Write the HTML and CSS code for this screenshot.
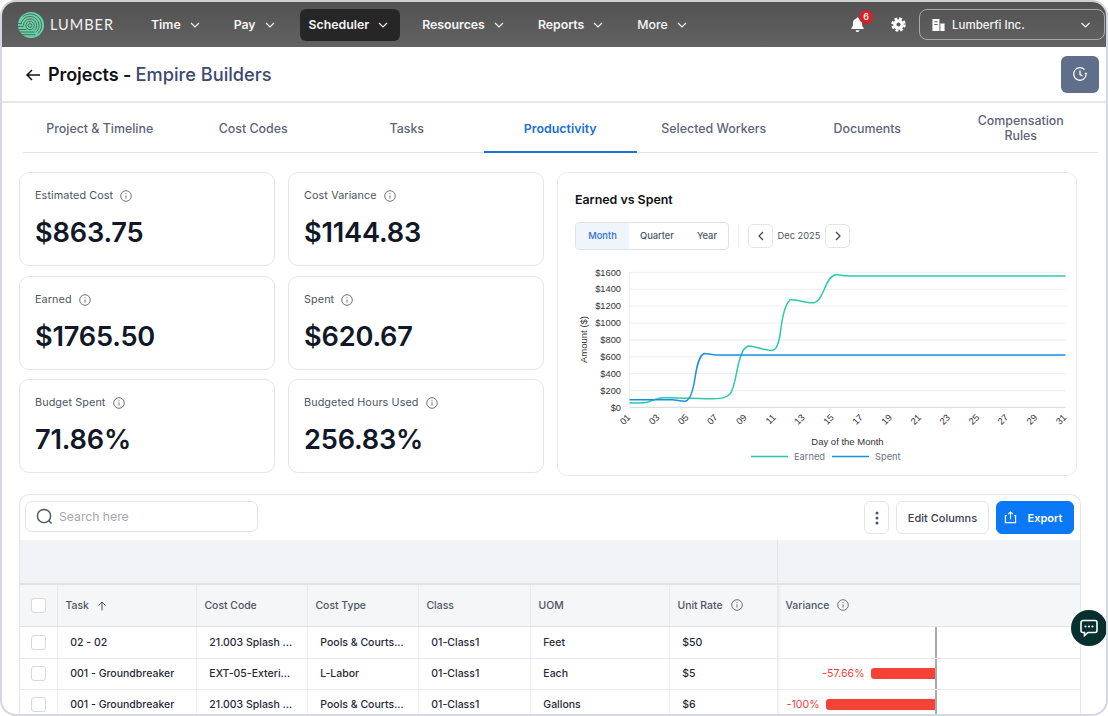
FILE: index.html
```html
<!DOCTYPE html>
<html lang="en">
<head>
<meta charset="utf-8">
<title>Projects - Empire Builders</title>
<link rel="stylesheet" href="styles.css">
</head>
<body>
<div class="window">
  <header class="topbar">
    <div class="brand">
      <svg class="logo" viewBox="0 0 26 26" width="26" height="26" fill="none" stroke="#595959" stroke-width="0.9">
        <circle cx="13" cy="13" r="13" fill="#62d6a6" stroke="none"/>
        <circle cx="12" cy="13.500" r="1.900"/>
        <circle cx="12" cy="13.500" r="4.200"/>
        <path d="M5.400 13.500a6.600 6.600 0 0 1 13.200 0c0 2-.8 3.700-2.200 4.900"/>
        <path d="M3 12.500C3.500 8 7.300 4.500 12 4.500c5 0 9 4 9 9 0 2.800-1.200 5.200-3 6.800"/>
        <path d="M5 4.500C7 2.900 9.500 2 12.300 2c6.200 0 11.300 5 11.300 11.300 0 3.300-1.400 6.200-3.600 8.300"/>
        <path d="M0 11.500h3M0 14.500h5.500M.5 17.500h8M1.500 20h15M4 22.700h13.500"/>
      </svg>
      <span class="wordmark">LUMBER</span>
    </div>
    <nav class="nav">
      <a class="nav-item">Time<svg class="chev" viewBox="0 0 10 6" width="10" height="6"><path d="M1 1l4 4 4-4"/></svg></a>
      <a class="nav-item">Pay<svg class="chev" viewBox="0 0 10 6" width="10" height="6"><path d="M1 1l4 4 4-4"/></svg></a>
      <a class="nav-item active">Scheduler<svg class="chev" viewBox="0 0 10 6" width="10" height="6"><path d="M1 1l4 4 4-4"/></svg></a>
      <a class="nav-item">Resources<svg class="chev" viewBox="0 0 10 6" width="10" height="6"><path d="M1 1l4 4 4-4"/></svg></a>
      <a class="nav-item">Reports<svg class="chev" viewBox="0 0 10 6" width="10" height="6"><path d="M1 1l4 4 4-4"/></svg></a>
      <a class="nav-item muted">More<svg class="chev" viewBox="0 0 10 6" width="10" height="6"><path d="M1 1l4 4 4-4"/></svg></a>
    </nav>
    <div class="top-actions">
      <span class="bell">
        <svg viewBox="0 0 16 18" width="15" height="17" fill="#fff"><path d="M8 1.500a1.200 1.200 0 0 1 1.200 1.200c2.400.6 3.700 2.500 3.700 5v2.600l1.600 2.400v1H1.500v-1l1.600-2.400V7.700c0-2.500 1.300-4.400 3.700-5A1.200 1.200 0 0 1 8 1.500zM6 15h4a2 2 0 0 1-4 0z"/></svg>
        <span class="badge">6</span>
      </span>
      <svg class="gear" viewBox="0 0 16 16" width="15" height="15">
        <circle cx="8" cy="8" r="5.600" fill="#fff"/>
        <circle cx="8" cy="8" r="6.300" fill="none" stroke="#fff" stroke-width="2.800" stroke-dasharray="2.900 2.050"/>
        <circle cx="8" cy="8" r="2.200" fill="#5a5a5a"/>
      </svg>
      <div class="company">
        <svg viewBox="0 0 15 15" width="15" height="14" fill="#fff"><path d="M1 1h7.500v13H1zM9.500 6H14v8H9.500z"/><path d="M3 4h3.500M3 7h3.500" stroke="#5a5a5a" stroke-width="1.200"/></svg>
        <span class="company-name">Lumberfi Inc.</span>
        <svg class="chev" viewBox="0 0 10 6" width="11" height="6"><path d="M1 1l4 4 4-4"/></svg>
      </div>
    </div>
  </header>

  <section class="titlebar">
    <div class="title">
      <svg viewBox="0 0 14 12" width="14" height="12" fill="none" stroke="#111" stroke-width="1.500"><path d="M14 6H1M6 1L1 6l5 5"/></svg>
      <h1><span class="title-main">Projects - </span><span class="title-sub">Empire Builders</span></h1>
    </div>
    <button class="history">
      <svg viewBox="0 0 16 16" width="16" height="16" fill="none" stroke="#fff" stroke-width="1.300"><path d="M14.200 8.500A6.300 6.300 0 1 1 12.500 3.600"/><path d="M8 4.500V8.500l2.500 1.300"/><path d="M15.500 6.800l-1.500 2-1.700-1.800z" fill="#fff" stroke="none"/></svg>
    </button>
  </section>

  <div class="tabs">
    <a class="tab">Project &amp; Timeline</a>
    <a class="tab">Cost Codes</a>
    <a class="tab">Tasks</a>
    <a class="tab current">Productivity</a>
    <a class="tab">Selected Workers</a>
    <a class="tab">Documents</a>
    <a class="tab">Compensation<br>Rules</a>
  </div>

  <main class="content">
    <div class="overview">
      <div class="stats">
        <div class="stat"><div class="stat-label">Estimated Cost<svg class="info" viewBox="0 0 12 12"><circle cx="6" cy="6" r="5.300"/><path d="M6 5.400v3.200M6 3.200v1"/></svg></div><div class="stat-value">$863.75</div></div>
        <div class="stat"><div class="stat-label">Cost Variance<svg class="info" viewBox="0 0 12 12"><circle cx="6" cy="6" r="5.300"/><path d="M6 5.400v3.200M6 3.200v1"/></svg></div><div class="stat-value">$1144.83</div></div>
        <div class="stat"><div class="stat-label">Earned<svg class="info" viewBox="0 0 12 12"><circle cx="6" cy="6" r="5.300"/><path d="M6 5.400v3.200M6 3.200v1"/></svg></div><div class="stat-value">$1765.50</div></div>
        <div class="stat"><div class="stat-label">Spent<svg class="info" viewBox="0 0 12 12"><circle cx="6" cy="6" r="5.300"/><path d="M6 5.400v3.200M6 3.200v1"/></svg></div><div class="stat-value">$620.67</div></div>
        <div class="stat"><div class="stat-label">Budget Spent<svg class="info" viewBox="0 0 12 12"><circle cx="6" cy="6" r="5.300"/><path d="M6 5.400v3.200M6 3.200v1"/></svg></div><div class="stat-value">71.86%</div></div>
        <div class="stat"><div class="stat-label">Budgeted Hours Used<svg class="info" viewBox="0 0 12 12"><circle cx="6" cy="6" r="5.300"/><path d="M6 5.400v3.200M6 3.200v1"/></svg></div><div class="stat-value">256.83%</div></div>
      </div>

      <section class="chart-card">
        <h2 class="chart-title">Earned vs Spent</h2>
        <div class="chart-controls">
          <div class="segmented">
            <span class="seg seg-on">Month</span>
            <span class="seg seg-q">Quarter</span>
            <span class="seg seg-y">Year</span>
          </div>
          <span class="vdivider"></span>
          <button class="pager"><svg viewBox="0 0 6 10" width="6" height="10"><path d="M5 1L1 5l4 4"/></svg></button>
          <span class="period">Dec 2025</span>
          <button class="pager"><svg viewBox="0 0 6 10" width="6" height="10"><path d="M1 1l4 4-4 4"/></svg></button>
        </div>
        <svg class="chart" viewBox="558 256 518 219" width="518" height="219">
          <g class="grid">
            <path d="M629.500 272.500H1065.500M629.500 289.300H1065.500M629.500 306.200H1065.500M629.500 323.100H1065.500M629.500 340H1065.500M629.500 356.800H1065.500M629.500 373.700H1065.500M629.500 390.500H1065.500"/>
            <path d="M629.500 272V407"/>
          </g>
          <path class="axis" d="M629.500 407.300H1065.500"/>
          <g class="ylabels">
            <text x="621" y="275.500">$1600</text><text x="621" y="292.400">$1400</text><text x="621" y="309.300">$1200</text><text x="621" y="326.100">$1000</text><text x="621" y="343">$800</text><text x="621" y="359.900">$600</text><text x="621" y="376.800">$400</text><text x="621" y="393.700">$200</text><text x="621" y="410.500">$0</text>
          </g>
          <text class="axis-title" transform="translate(587 339.500) rotate(-90)">Amount ($)</text>
          <g class="xlabels">
            <text transform="translate(631 418) rotate(-45)">01</text>
            <text transform="translate(660.100 418) rotate(-45)">03</text>
            <text transform="translate(689.100 418) rotate(-45)">05</text>
            <text transform="translate(718.200 418) rotate(-45)">07</text>
            <text transform="translate(747.300 418) rotate(-45)">09</text>
            <text transform="translate(776.300 418) rotate(-45)">11</text>
            <text transform="translate(805.400 418) rotate(-45)">13</text>
            <text transform="translate(834.500 418) rotate(-45)">15</text>
            <text transform="translate(863.500 418) rotate(-45)">17</text>
            <text transform="translate(892.600 418) rotate(-45)">19</text>
            <text transform="translate(921.700 418) rotate(-45)">21</text>
            <text transform="translate(950.700 418) rotate(-45)">23</text>
            <text transform="translate(979.800 418) rotate(-45)">25</text>
            <text transform="translate(1008.900 418) rotate(-45)">27</text>
            <text transform="translate(1037.900 418) rotate(-45)">29</text>
            <text transform="translate(1067 418) rotate(-45)">31</text>
          </g>
          <text class="axis-title" x="847.500" y="444.500">Day of the Month</text>
          <path class="line-earned" d="M629.500 402.700C636 403.200 643 403.500 648 402C654 399.500 658 398 664 397.800C672 397.500 680 398.300 690 398.300C698 398.300 704 399 712 398.800C720 398.500 726 398.500 730 394C735 388 736 372 739 362C742 351 744 347 749 346C756 346.500 766 350.500 771 350.500C776 350.500 778 346 780 335C782 320 784 306 790 299.800C796 299.300 808 303.500 814 302.700C819 302 821 296 824 290C827 282 830 276 836 274.500C840 275 843 276 850 276H1065.500"/>
          <path class="line-spent" d="M629.500 399.700H672C677 399.700 682 402 686 401C690 399.500 693 391 695 378C697 365 699 356 704 353.500C709 353.500 713 355 720 355H1065.500"/>
          <path class="line-earned" d="M751 456.500H788"/>
          <text class="legend" x="794" y="460">Earned</text>
          <path class="line-spent" d="M832 456.500H869"/>
          <text class="legend" x="875" y="460">Spent</text>
        </svg>
      </section>
    </div>

    <section class="table-card">
      <div class="toolbar">
        <div class="search">
          <svg viewBox="0 0 18 18" width="17" height="17" fill="none" stroke="#4b5563" stroke-width="1.500"><circle cx="8.500" cy="8.500" r="7"/><path d="M13.500 13.500l3 3"/></svg>
          <span>Search here</span>
        </div>
        <div class="toolbar-actions">
          <button class="btn btn-kebab"><svg viewBox="0 0 4 14" width="4" height="14" fill="#4b5563"><circle cx="2" cy="2" r="1.500"/><circle cx="2" cy="7" r="1.500"/><circle cx="2" cy="12" r="1.500"/></svg></button>
          <button class="btn btn-edit">Edit Columns</button>
          <button class="btn btn-export"><svg viewBox="0 0 14 14" width="13" height="13" fill="none" stroke="#fff" stroke-width="1.200"><path d="M3 5H1.500v7.500h11V5H11M7 9V1M4.500 3.300L7 1l2.500 2.300"/></svg>Export</button>
        </div>
      </div>
      <table class="grid-table">
        <colgroup>
          <col class="c-check"><col class="c-task"><col class="c-code"><col class="c-type"><col class="c-class"><col class="c-uom"><col class="c-rate"><col class="c-var">
        </colgroup>
        <thead>
          <tr class="band"><th colspan="7"></th><th class="band-pin"></th></tr>
          <tr class="head">
            <th><span class="check"></span></th>
            <th>Task<svg class="sort" viewBox="0 0 10 10" width="10" height="10"><path d="M5 9.500V1M1.500 4.500L5 1l3.500 3.500"/></svg></th>
            <th>Cost Code</th>
            <th>Cost Type</th>
            <th>Class</th>
            <th>UOM</th>
            <th>Unit Rate<svg class="info" viewBox="0 0 12 12"><circle cx="6" cy="6" r="5.300"/><path d="M6 5.400v3.200M6 3.200v1"/></svg></th>
            <th class="pin">Variance<svg class="info" viewBox="0 0 12 12"><circle cx="6" cy="6" r="5.300"/><path d="M6 5.400v3.200M6 3.200v1"/></svg></th>
          </tr>
        </thead>
        <tbody>
          <tr>
            <td><span class="check"></span></td><td>02 - 02</td><td>21.003 Splash ...</td><td>Pools &amp; Courts...</td><td>01-Class1</td><td>Feet</td><td>$50</td>
            <td class="pin var-cell"><div class="var"></div></td>
          </tr>
          <tr>
            <td><span class="check"></span></td><td>001 - Groundbreaker</td><td>EXT-05-Exteri...</td><td>L-Labor</td><td>01-Class1</td><td>Each</td><td>$5</td>
            <td class="pin var-cell"><div class="var"><span class="var-num">-57.66%</span><span class="bar" style="width:64px"></span></div></td>
          </tr>
          <tr>
            <td><span class="check"></span></td><td>001 - Groundbreaker</td><td>21.003 Splash ...</td><td>Pools &amp; Courts...</td><td>01-Class1</td><td>Gallons</td><td>$6</td>
            <td class="pin var-cell"><div class="var"><span class="var-num">-100%</span><span class="bar" style="width:109px"></span></div></td>
          </tr>
        </tbody>
      </table>
    </section>
  </main>

  <button class="chat">
    <svg viewBox="0 0 20 20" width="20" height="20" fill="none"><path d="M4 2.500h12a2 2 0 0 1 2 2v8a2 2 0 0 1-2 2H9l-3.500 3v-3H4a2 2 0 0 1-2-2v-8a2 2 0 0 1 2-2z" stroke="#fff" stroke-width="1.600"/><circle cx="6.500" cy="8.500" r="1.100" fill="#fff"/><circle cx="10" cy="8.500" r="1.100" fill="#fff"/><circle cx="13.500" cy="8.500" r="1.100" fill="#fff"/></svg>
  </button>
</div>
</body>
</html>
```

FILE: styles.css
```css
* { box-sizing: border-box; }
html, body { margin: 0; padding: 0; height: 100%; }
body {
  background: #fff;
  font-family: Inter, "Liberation Sans", sans-serif;
  color: #111827;
  overflow: hidden;
}
button { font-family: inherit; cursor: pointer; }

.window {
  position: relative;
  width: 1108px;
  height: 716px;
  background: #fff;
  border: 2px solid #d5d7e2;
  border-top-color: #cfcfcf;
  border-radius: 16px;
  overflow: hidden;
}

/* top bar */
.topbar {
  display: flex;
  align-items: center;
  height: 45px;
  padding: 0 1px 0 16px;
  background: linear-gradient(#525252, #626262);
}
.brand { display: flex; align-items: center; gap: 6px; width: 124px; }
.logo { display: block; flex: none; }
.wordmark {
  font-family: Lato, "Liberation Sans", sans-serif;
  font-size: 14.5px;
  letter-spacing: 1px;
  color: #f2f2f2;
}
.nav { display: flex; align-items: center; gap: 13px; }
.nav-item {
  display: flex;
  align-items: center;
  gap: 9px;
  height: 32px;
  padding: 0 12px 0 9px;
  border-radius: 6px;
  font-size: 12.3px;
  font-weight: 600;
  color: #f5f5f5;
}
.nav-item.active { background: #262626; }
.nav-item.muted { font-weight: 500; }
.chev { display: block; flex: none; fill: none; stroke: #f2f2f2; stroke-width: 1.2; }
.top-actions { display: flex; align-items: center; margin-left: auto; }
.bell { position: relative; display: block; height: 17px; margin-right: 26px; }
.bell svg { display: block; }
.badge {
  position: absolute;
  top: -6px;
  left: 9px;
  width: 14px;
  height: 14px;
  border-radius: 50%;
  background: #d3222a;
  color: #fff;
  font-size: 9px;
  font-weight: 500;
  line-height: 14px;
  text-align: center;
}
.gear { display: block; margin-right: 13px; }
.company {
  display: flex;
  align-items: center;
  width: 186px;
  height: 31px;
  padding: 0 13px 0 11px;
  border: 1px solid #a9a9a9;
  border-radius: 8px;
  color: #f5f5f5;
}
.company-name { font-size: 11.5px; font-weight: 500; margin-left: 6px; }
.company .chev { margin-left: auto; }

/* title */
.titlebar {
  display: flex;
  align-items: center;
  justify-content: space-between;
  height: 56px;
  padding: 0 7px 0 24px;
  border-bottom: 2px solid #e6e7ea;
}
.title { display: flex; align-items: center; gap: 8px; padding-top: 1px; }
.title svg { display: block; }
.title h1 { margin: 0; font-size: 18px; font-weight: 500; line-height: 24px; }
.title-main { color: #0f1115; font-weight: 600; letter-spacing: -0.1px; }
.title-sub { color: #3c4a72; font-weight: 500; font-size: 18.2px; }
.history {
  display: flex;
  align-items: center;
  justify-content: center;
  width: 38px;
  height: 37px;
  padding: 0;
  border: 0;
  border-radius: 6px;
  background: #5f6e8a;
}

/* tabs */
.tabs {
  display: grid;
  grid-template-columns: repeat(7, 153.5px);
  height: 50px;
  margin-left: 21px;
  width: 1075px;
  border-bottom: 1px solid #e2e4e8;
}
.tab {
  display: flex;
  align-items: center;
  justify-content: center;
  text-align: center;
  font-size: 12.4px;
  line-height: 15px;
  font-weight: 500;
  color: #5c6478;
}
.tab.current {
  color: #1b6fd6;
  font-weight: 600;
  height: 50px;
  padding-top: 2px;
  border-bottom: 2px solid #1b6fd6;
}

/* main */
.content { padding: 19px 0 0 17px; }
.overview { display: flex; gap: 13px; align-items: flex-start; }
.stats {
  display: grid;
  grid-template-columns: 256px 256px;
  grid-auto-rows: 94px;
  gap: 9.6px 13px;
}
.stat {
  padding: 15px 15px 0;
  border: 1px solid #e4e6e9;
  border-radius: 10px;
  background: #fff;
}
.stat-label {
  display: flex;
  align-items: center;
  gap: 7px;
  font-size: 10.8px;
  line-height: 16px;
  color: #4b5563;
  font-weight: 400;
  letter-spacing: 0.1px;
}
.info {
  display: block;
  flex: none;
  width: 12px;
  height: 12px;
  fill: none;
  stroke: #5c6470;
  stroke-width: 0.9;
}
.stat-value {
  margin-top: 11px;
  font-size: 27.200px;
  line-height: 36px;
  font-weight: 600;
  color: #111827;
  letter-spacing: -0.2px;
}

/* chart */
.chart-card {
  width: 520px;
  height: 304px;
  border: 1px solid #e8eaed;
  border-radius: 10px;
  padding-top: 18px;
}
.chart-title {
  margin: 0 0 0 17px;
  font-size: 12.4px;
  line-height: 18px;
  font-weight: 600;
  color: #0f1115;
}
.chart-controls {
  display: flex;
  align-items: center;
  height: 29px;
  margin: 12px 0 0 17px;
}
.segmented {
  display: flex;
  align-items: stretch;
  width: 154px;
  height: 28px;
  border: 1px solid #dfe3e8;
  border-radius: 4px;
  overflow: hidden;
  font-size: 9.3px;
  font-weight: 500;
  color: #4b5563;
}
.seg { display: flex; align-items: center; }
.seg-on { width: 53px; justify-content: center; background: #f0f5fb; color: #2b6fe3; }
.seg-q { margin-left: 11px; }
.seg-y { margin-left: 23px; }
.vdivider { width: 1px; height: 24px; margin: 0 9px; background: #f0f1f3; }
.pager {
  display: flex;
  align-items: center;
  justify-content: center;
  width: 25px;
  height: 24px;
  padding: 0;
  background: #fff;
  border: 1px solid #e3e5e8;
  border-radius: 5px;
}
.pager svg { display: block; fill: none; stroke: #374151; stroke-width: 1.200; }
.period { width: 52px; text-align: center; font-size: 9.3px; font-weight: 400; color: #4b5563; }
.chart { display: block; margin-top: 6px; }
.grid path { fill: none; stroke: #f0f1f3; stroke-width: 1.300; }
.axis { fill: none; stroke: #d6d8dc; stroke-width: 1; }
.ylabels text { font-family: "Liberation Sans", sans-serif; font-size: 9.3px; text-anchor: end; fill: #333; }
.xlabels text { font-family: "Liberation Sans", sans-serif; font-size: 9.3px; text-anchor: end; fill: #333; }
.axis-title { font-family: "Liberation Sans", sans-serif; font-size: 9.500px; text-anchor: middle; fill: #333; }
.legend { font-size: 9.3px; fill: #6b7280; }
.line-earned { fill: none; stroke: #2ec9ac; stroke-width: 1.500; }
.line-spent { fill: none; stroke: #1b8fe0; stroke-width: 1.500; }

/* table */
.table-card {
  width: 1062px;
  margin-top: 18px;
  border: 1px solid #e4e6e9;
  border-bottom: 0;
  border-radius: 10px 10px 0 0;
  overflow: hidden;
}
.toolbar {
  display: flex;
  align-items: center;
  justify-content: space-between;
  height: 45px;
  padding: 0 6px 0 5px;
}
.search {
  display: flex;
  align-items: center;
  gap: 6px;
  width: 233px;
  height: 31px;
  margin-bottom: 2px;
  padding: 0 10px;
  border: 1px solid #e1e3e7;
  border-radius: 7px;
  font-size: 12.200px;
  color: #a3a8b1;
}
.search svg { display: block; }
.toolbar-actions { display: flex; align-items: center; gap: 7px; }
.btn {
  display: flex;
  align-items: center;
  justify-content: center;
  height: 33px;
  padding: 0;
  border: 1px solid #e4e6e9;
  border-radius: 6px;
  background: #fff;
  font-size: 11px;
  font-weight: 500;
  color: #374151;
}
.btn-kebab { width: 25px; }
.btn-edit { width: 93px; }
.btn-export {
  gap: 11px;
  width: 78px;
  padding-right: 4px;
  border-color: #0b78f5;
  background: #0b78f5;
  color: #fff;
  font-weight: 600;
}
.btn-export svg { display: block; }

.grid-table {
  width: 1060px;
  table-layout: fixed;
  border-collapse: collapse;
  font-size: 11px;
}
.c-check { width: 37px; }
.c-task { width: 139px; }
.c-code { width: 111px; }
.c-type { width: 111px; }
.c-class { width: 112px; }
.c-uom { width: 139px; }
.c-rate { width: 108px; }
.c-var { width: 303px; }
.band th {
  height: 44px;
  padding: 0;
  background: #f1f3f6;
  border-bottom: 2px solid #dfe1e5;
}
.band .band-pin { border-left: 1px solid #e4e6ea; }
.head th {
  height: 42px;
  padding: 0 8px;
  background: #f5f6f8;
  border-bottom: 1px solid #dfe1e5;
  border-right: 1px solid #e7e9ec;
  font-size: 10.4px;
  font-weight: 500;
  text-align: left;
  color: #4b5563;
  white-space: nowrap;
}
.head th:first-child { padding: 0 0 0 11px; }
.head th .sort, .head th .info { display: inline-block; vertical-align: -2px; margin-left: 8px; }
.sort { fill: none; stroke: #4b5563; stroke-width: 1; }
.grid-table td {
  height: 31px;
  padding: 0 4px 0 12.8px;
  border-bottom: 1px solid #e9ebee;
  border-right: 1px solid #eceef0;
  font-size: 10.5px;
  font-weight: 500;
  color: #1f2937;
  white-space: nowrap;
  overflow: hidden;
}
.grid-table tbody tr:first-child td { height: 32px; }
.grid-table td:first-child { padding: 0 0 0 11px; }
.check {
  display: block;
  width: 15px;
  height: 15px;
  border: 1px solid #d7dade;
  border-radius: 3px;
  background: #fff;
}
.pin { box-shadow: inset 4px 0 3px -3px rgba(0, 0, 0, 0.07); }
.grid-table td.var-cell { padding: 0; border-right: 0; }
.var {
  display: flex;
  align-items: center;
  justify-content: flex-end;
  gap: 6px;
  width: 159px;
  height: 30px;
  border-right: 2px solid #a9abb0;
}
.grid-table tbody tr:first-child .var { height: 31px; }
.var-num { font-size: 10.6px; font-weight: 400; color: #ef4136; }
.bar {
  display: block;
  height: 11px;
  background: #f44336;
  border-radius: 3px 0 0 3px;
}

.chat {
  position: absolute;
  right: -1px;
  top: 608px;
  display: flex;
  align-items: center;
  justify-content: center;
  width: 36px;
  height: 36px;
  padding: 0;
  border: 0;
  border-radius: 50%;
  background: #05302f;
}
.chat svg { display: block; }
```
